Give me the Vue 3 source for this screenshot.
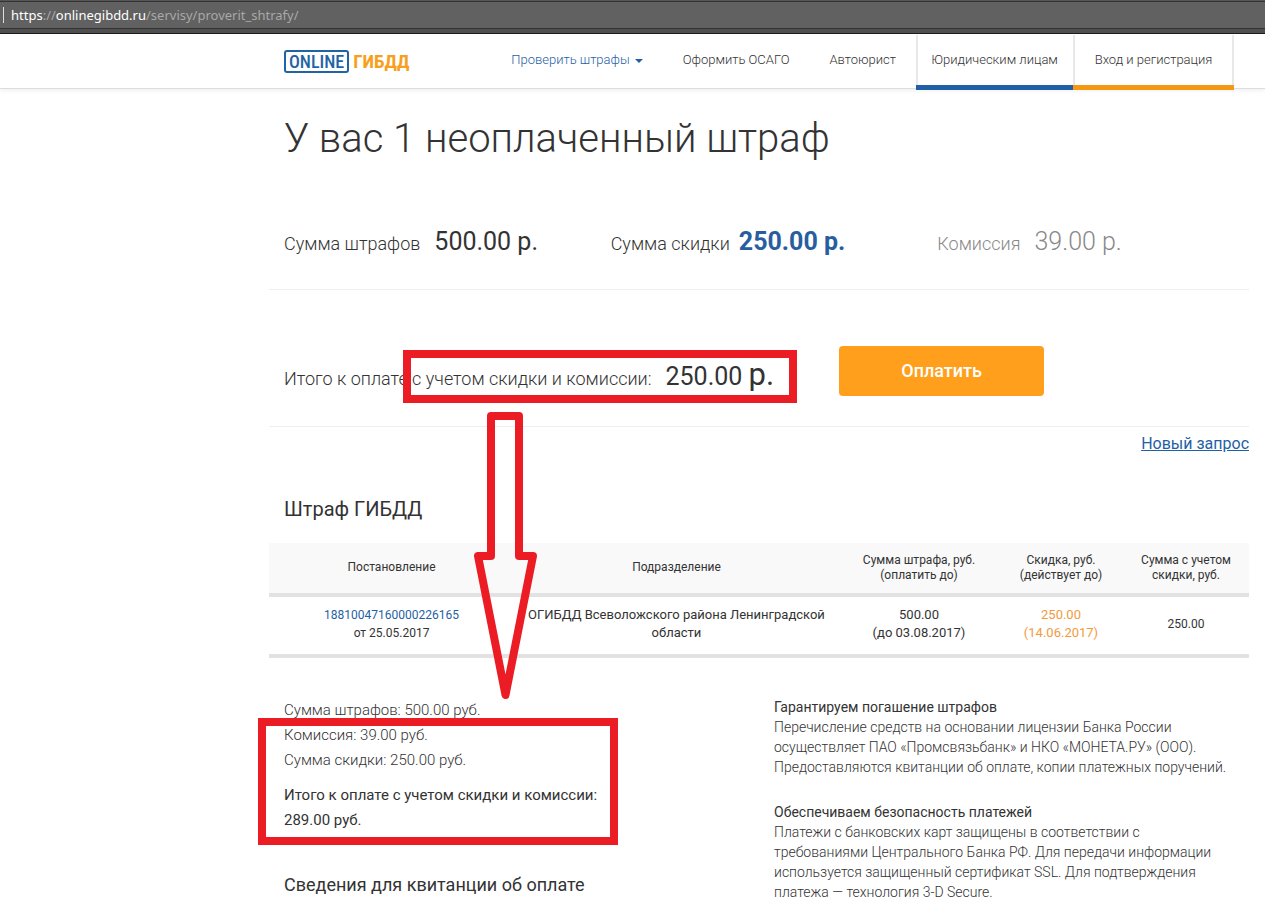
<script setup>
const navLinks = ['Оформить ОСАГО', 'Автоюрист']

const receipt = [
  'Сумма штрафов: 500.00 руб.',
  'Комиссия: 39.00 руб.',
  'Сумма скидки: 250.00 руб.'
]
</script>

<template>
  <div class="page">
    <div class="address">
      <span class="caret"></span>
      <span class="url"><b>https</b>://<b>onlinegibdd.ru</b>/servisy/proverit_shtrafy/</span>
    </div>

    <header class="header">
      <a href="#" class="logo"><span class="logo-box">ONLINE</span><span class="logo-name">ГИБДД</span></a>
      <nav class="nav">
        <a href="#" class="nav-link active">Проверить штрафы<svg class="arrow" width="8" height="4" viewBox="0 0 8 4" aria-hidden="true"><path d="M0 0h8L4 4z" fill="#1f5fa6" /></svg></a>
        <a v-for="link in navLinks" :key="link" href="#" class="nav-link">{{ link }}</a>
      </nav>
      <div class="tabs">
        <a href="#" class="tab blue">Юридическим лицам</a>
        <a href="#" class="tab orange">Вход и регистрация</a>
      </div>
    </header>

    <main class="content">
      <h1>У вас 1 неоплаченный штраф</h1>

      <section class="sums">
        <div class="sum"><span>Сумма штрафов</span><span class="value">500.00 р.</span></div>
        <div class="sum tight"><span>Сумма скидки</span><span class="value discount">250.00 р.</span></div>
        <div class="sum muted"><span>Комиссия</span><span class="value">39.00 р.</span></div>
      </section>

      <section class="total">
        <div class="sum">
          <span>Итого к оплате с учетом скидки и комиссии:</span>
          <span class="value">250.00 <span class="currency">р.</span></span>
        </div>
        <button type="button" class="pay">Оплатить</button>
      </section>

      <div class="again"><a href="#">Новый запрос</a></div>

      <h2 class="title">Штраф ГИБДД</h2>

      <table class="fines">
        <colgroup>
          <col class="c1"><col class="c2"><col class="c3"><col class="c4"><col class="c5">
        </colgroup>
        <thead>
          <tr>
            <th>Постановление</th>
            <th>Подразделение</th>
            <th>Сумма штрафа, руб.<br>(оплатить до)</th>
            <th>Скидка, руб.<br>(действует до)</th>
            <th>Сумма с учетом<br>скидки, руб.</th>
          </tr>
        </thead>
        <tbody>
          <tr>
            <td class="small"><a href="#">18810047160000226165</a><br>от 25.05.2017</td>
            <td>ОГИБДД Всеволожского района Ленинградской области</td>
            <td>500.00<br>(до 03.08.2017)</td>
            <td class="accent">250.00<br>(14.06.2017)</td>
            <td class="small">250.00</td>
          </tr>
        </tbody>
      </table>

      <div class="columns">
        <section class="receipt">
          <p v-for="line in receipt" :key="line">{{ line }}</p>
          <p class="result">Итого к оплате с учетом скидки и комиссии:<br>289.00 руб.</p>
          <h2>Сведения для квитанции об оплате</h2>
        </section>
        <section class="notes">
          <h3>Гарантируем погашение штрафов</h3>
          <p>Перечисление средств на основании лицензии Банка России<br>осуществляет ПАО «Промсвязьбанк» и НКО «МОНЕТА.РУ» (ООО).<br>Предоставляются квитанции об оплате, копии платежных поручений.</p>
          <h3>Обеспечиваем безопасность платежей</h3>
          <p>Платежи с банковских карт защищены в соответствии с<br>требованиями Центрального Банка РФ. Для передачи информации<br>используется защищенный сертификат SSL. Для подтверждения<br>платежа — технология 3-D Secure.</p>
        </section>
      </div>
    </main>

    <div class="mark mark-total"></div>
    <svg class="mark-arrow" width="64" height="290" viewBox="0 0 64 290" aria-hidden="true">
      <path d="M17 5H45V145H59L31.500 284L4 145H17Z" fill="none" stroke="#ec1c24" stroke-width="8" stroke-linejoin="round" />
    </svg>
    <div class="mark mark-receipt"></div>
  </div>
</template>

<style>
body {
  margin: 0;
  background: #fff;
}
</style>

<style scoped>
.page {
  position: relative;
  font-family: Roboto, "Liberation Sans", sans-serif;
  font-weight: 300;
  color: #333;
}
a {
  color: #1f5fa6;
  text-decoration: none;
}
h1, h2, h3, p {
  margin: 0;
  font-weight: 400;
}

.address {
  box-sizing: border-box;
  height: 34px;
  display: flex;
  align-items: center;
  gap: 7px;
  padding: 0 3px 4px;
  background: linear-gradient(#565656 1px, #333 1px 2px, #616161 2px 28px, #333 28px 29px, #4f4f4f 29px 33px, #1f1a1d 33px);
  font: 400 13px/20px "Noto Sans", "Open Sans", sans-serif;
  color: #a8a8a8;
}
.caret {
  width: 1px;
  height: 16px;
  background: #ddd;
}
.url b {
  font-weight: 400;
  color: #fff;
}

.header {
  box-sizing: border-box;
  height: 55px;
  display: flex;
  align-items: flex-start;
  padding: 0 31px 0 284px;
  border-bottom: 1px solid #ddd;
  box-shadow: 0 2px 4px rgba(0, 0, 0, .06);
}
.logo {
  display: flex;
  align-items: center;
  gap: 4px;
  margin-top: 16px;
  font: 500 18px/19px "Roboto Condensed", "Liberation Sans Narrow", Roboto, sans-serif;
}
.logo-box {
  padding: 0 3px;
  border: 2px solid #1f65a6;
  border-radius: 3px;
  color: #1f65a6;
}
.logo-name {
  color: #f7a01d;
  font-size: 19px;
  font-weight: 700;
}
.nav {
  flex: 1;
  display: flex;
  justify-content: flex-end;
  gap: 40px;
  padding-right: 20px;
}
.nav-link, .tab {
  font-size: 13px;
  line-height: 52px;
  color: #333;
  white-space: nowrap;
}
.nav-link.active {
  color: #1f5fa6;
}
.arrow {
  margin-left: 5px;
  vertical-align: 1px;
}
.tabs {
  display: flex;
  padding-top: 1px;
}
.tab {
  box-sizing: border-box;
  height: 55px;
  line-height: 50px;
  text-align: center;
  box-shadow: inset 2px 0 #e8e8e8;
}
.blue {
  width: 157px;
  box-shadow: inset 0 -5px #1f61a4, inset 2px 0 #e8e8e8;
}
.orange {
  width: 161px;
  box-shadow: inset 0 -5px #f49813, inset 2px 0 #e8e8e8, inset -2px 0 #e8e8e8;
}

.content {
  padding: 26px 16px 0 269px;
}
h1 {
  padding-left: 15px;
  font-size: 40px;
  line-height: 48px;
  font-weight: 300;
}
.sums {
  display: grid;
  grid-template-columns: repeat(3, 1fr);
  padding: 63px 0 29px;
  border-bottom: 1px solid #eee;
}
.sum {
  display: flex;
  align-items: baseline;
  gap: 14px;
  padding-left: 15px;
  font-size: 18px;
  line-height: 32px;
  white-space: nowrap;
}
.sum.tight {
  gap: 9px;
}
.value {
  font-size: 25px;
  font-weight: 400;
}
.discount {
  font-weight: 700;
  color: #285e9f;
}
.muted, .muted .value {
  color: #888;
  font-weight: 300;
}
.currency {
  font-size: 31px;
}
.total {
  display: flex;
  align-items: flex-start;
  gap: 65px;
  padding: 56px 0 30px;
  border-bottom: 1px solid #eee;
}
.total .sum {
  padding-top: 13px;
}
.pay {
  width: 205px;
  height: 50px;
  border: 0;
  border-radius: 4px;
  background: #ff9f1c;
  color: #fff;
  font: 500 18px/24px Roboto, sans-serif;
}
.again {
  padding-top: 5px;
  text-align: right;
  font-size: 16px;
  line-height: 24px;
  font-weight: 400;
}
.again a {
  text-decoration: underline;
}
.title {
  padding: 39px 0 20px 15px;
  font-size: 20px;
  line-height: 28px;
}

.fines {
  width: 100%;
  table-layout: fixed;
  border-collapse: collapse;
  text-align: center;
  font-weight: 400;
}
.c1 { width: 245px; }
.c2 { width: 325px; }
.c3 { width: 160px; }
.c4 { width: 124px; }
.c5 { width: 126px; }
.fines tr {
  border-bottom: 4px solid #e2e2e2;
}
.fines th {
  height: 49px;
  padding: 0 0 1px;
  background: #f9f9f9;
  font-size: 12px;
  line-height: 15px;
  font-weight: 400;
}
.fines td {
  height: 54px;
  padding: 0 10px 3px;
  font-size: 13px;
  line-height: 18px;
}
.fines td.small {
  font-size: 12px;
}
.fines .accent {
  color: #f29a3c;
}

.columns {
  display: grid;
  grid-template-columns: 1fr 1fr;
  padding-top: 39px;
}
.receipt, .notes {
  padding-left: 15px;
}
.receipt {
  padding-top: 1px;
  font-size: 15px;
  line-height: 25px;
}
.receipt p {
  font-weight: 300;
}
.receipt .result {
  margin-top: 10px;
  font-weight: 400;
}
.receipt h2 {
  margin-top: 38px;
  font-size: 18px;
  line-height: 28px;
}
.notes {
  font-size: 14px;
  line-height: 20px;
}
.notes h3 {
  font-size: 14px;
}
.notes p {
  margin-bottom: 25px;
  font-weight: 300;
}

.mark {
  position: absolute;
  box-sizing: border-box;
  border: 8px solid #ec1c24;
  pointer-events: none;
}
.mark-total {
  left: 403px;
  top: 350px;
  width: 394px;
  height: 53px;
}
.mark-receipt {
  left: 258px;
  top: 718px;
  width: 360px;
  height: 127px;
}
.mark-arrow {
  position: absolute;
  left: 474px;
  top: 411px;
  pointer-events: none;
}
</style>
